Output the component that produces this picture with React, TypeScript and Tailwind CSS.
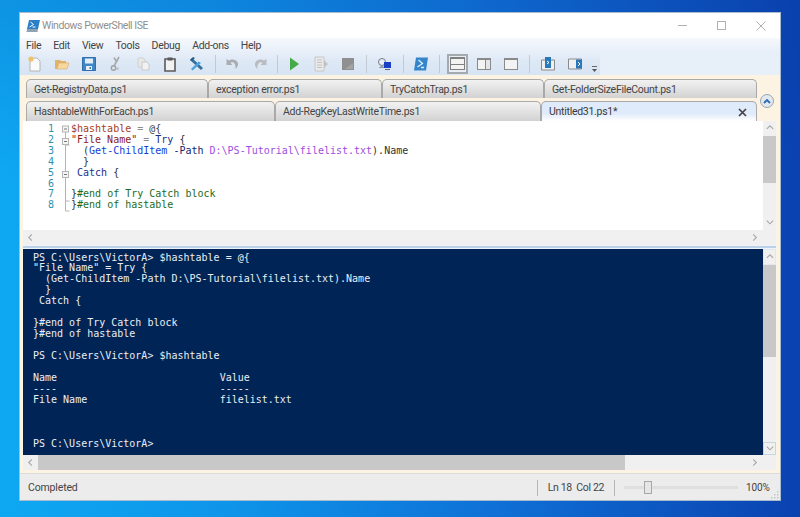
import type { ReactNode } from 'react';

const MONO = "font-['DejaVu_Sans_Mono',monospace]";

const menus = ['File', 'Edit', 'View', 'Tools', 'Debug', 'Add-ons', 'Help'];

function Tool({ children, width = 'w-[27px]' }: { children: ReactNode; width?: string }) {
  return <div className={`${width} h-full flex items-center justify-center shrink-0`}>{children}</div>;
}

function Sep({ width }: { width: string }) {
  return (
    <div className={`${width} h-full flex items-center justify-center shrink-0`}>
      <div className="w-px h-[18px] bg-[#c0c9d4]" />
    </div>
  );
}

function Ic({ children }: { children: ReactNode }) {
  return (
    <svg width="16" height="16" viewBox="0 0 16 16">
      {children}
    </svg>
  );
}

function Toolbar() {
  return (
    <div className="h-[23px] flex">
      <div className="flex items-center pl-[1.5px] h-full">
        {/* new */}
        <Tool>
          <Ic>
            <path d="M3 2h7l3 3v10H3z" fill="#fbfbfb" stroke="#b4b4b4" />
            <circle cx="4" cy="3" r="2.6" fill="#f3c06a" />
          </Ic>
        </Tool>
        {/* open */}
        <Tool>
          <Ic>
            <path d="M1 13V4h5l1 1h5v2H5L3 13z" fill="#e0b26a" />
            <path d="M3 13l2-6h10l-2 6z" fill="#f6d79c" stroke="#d8ac68" strokeWidth=".6" />
          </Ic>
        </Tool>
        {/* save */}
        <Tool>
          <Ic>
            <path d="M1.5 1.5h13v13h-13z" fill="#3f86c6" stroke="#2f6ea8" />
            <path d="M4 2.500h8v5H4z" fill="#e2edf7" />
            <path d="M5 10h6v4H5z" fill="#e9eff5" />
            <path d="M8.500 11h1.500v2H8.500z" fill="#3a76ac" />
          </Ic>
        </Tool>
        {/* cut */}
        <Tool>
          <Ic>
            <path d="M11 1L6 10M6 1.500l3 5" stroke="#a9a9a9" strokeWidth="1.600" fill="none" />
            <circle cx="5.500" cy="12" r="2.200" fill="none" stroke="#a2a2a2" strokeWidth="1.400" />
            <circle cx="9.500" cy="12.500" r="1.500" fill="#c4c4c4" />
          </Ic>
        </Tool>
        {/* copy */}
        <Tool>
          <Ic>
            <path d="M3 2h5l2 2v7H3z" fill="#e8e8e8" stroke="#cfcfcf" />
            <path d="M7 6h5l2 2v6H7z" fill="#f2f2f2" stroke="#c8c8c8" />
          </Ic>
        </Tool>
        {/* paste */}
        <Tool>
          <Ic>
            <path d="M3 3h10v12H3z" fill="#f2f2f2" stroke="#595959" strokeWidth="1.600" />
            <path d="M5.500 1.500h5v3h-5z" fill="#595959" />
          </Ic>
        </Tool>
        {/* compile */}
        <Tool>
          <Ic>
            <path d="M3 2l11 10-2 2L1 4z" fill="#35709f" />
            <path d="M9.500 5.500L2 13l1.600 1.600L12 7z" fill="#4da3dc" />
            <path d="M1 4l3-3 2 1-3 3z" fill="#2a5d85" />
          </Ic>
        </Tool>
        <Sep width="w-[9px]" />
        {/* undo */}
        <Tool>
          <Ic>
            <path d="M1.500 3v6h6L5.300 6.800C7.500 5.500 11 6.500 10.500 13c3.500-3 3.500-7-.5-9-2-1-4.500-.6-6 .6z" fill="#a9adb1" />
          </Ic>
        </Tool>
        {/* redo */}
        <Tool>
          <Ic>
            <path d="M14.500 3v6h-6l2.200-2.200C8.500 5.500 5 6.500 5.500 13c-3.500-3-3.500-7 .5-9 2-1 4.500-.6 6 .6z" fill="#b8bcc0" />
          </Ic>
        </Tool>
        <Sep width="w-[7px]" />
        {/* run */}
        <Tool>
          <Ic>
            <path d="M4 1.500v13l9-6.500z" fill="#45aa49" />
          </Ic>
        </Tool>
        {/* run selection */}
        <Tool>
          <Ic>
            <path d="M2 1h9v14H2z" fill="#e9e9e9" stroke="#c8c8c8" />
            <path d="M4 4h5M4 6.500h5M4 9h5M4 11.500h5" stroke="#c2c2c2" />
            <path d="M11 4v8l4-4z" fill="#c2c2c2" />
          </Ic>
        </Tool>
        {/* stop */}
        <Tool>
          <Ic>
            <path d="M2 2h12v12H2z" fill="#8f8f8f" />
            <path d="M5 13l8-6v6z" fill="#a3a3a3" />
          </Ic>
        </Tool>
        <Sep width="w-[10px]" />
        {/* remote */}
        <Tool>
          <Ic>
            <circle cx="5" cy="6" r="3.500" fill="#e8eef4" stroke="#6f7c88" />
            <path d="M2 12c.5-2.500 5.500-2.500 6 0z" fill="#8a96a2" />
            <path d="M7 6h7v6H7z" fill="#1b3fc4" />
            <path d="M8 13h5v1H8z" fill="#58656f" />
          </Ic>
        </Tool>
        <Sep width="w-[9px]" />
        {/* new remote powershell tab */}
        <Tool>
          <Ic>
            <path d="M3 1.500h12l-2 13H1z" fill="#3585cc" />
            <path d="M5.500 4l4 3.500-5 3.500M8 11.500h3" stroke="#dff0fb" strokeWidth="1.300" fill="none" />
          </Ic>
        </Tool>
        <Sep width="w-[9px]" />
        {/* script pane top */}
        <Tool>
          <div className="w-[21px] h-[20px] border-2 border-[#a4aab0] bg-[#e9eef4] flex items-center justify-center">
            <div className="w-[15px] h-[13px] border border-[#808080] border-t-2 bg-[#f3f3f3] flex flex-col justify-center">
              <div className="h-px bg-[#808080]" />
            </div>
          </div>
        </Tool>
        {/* script pane right */}
        <Tool>
          <div className="w-[14px] h-[12px] border border-[#8a8a8a] border-t-2 bg-[#f3f3f3] flex justify-end">
            <div className="w-[5px] h-full border-l border-[#8a8a8a] bg-[#e2e6ea]" />
          </div>
        </Tool>
        {/* script pane maximized */}
        <Tool>
          <div className="w-[14px] h-[12px] border border-[#8a8a8a] border-t-2 bg-[#f3f3f3]" />
        </Tool>
        <Sep width="w-[10px]" />
        {/* show script pane */}
        <Tool>
          <Ic>
            <path d="M1.500 4h13v10h-13z" fill="#eef0f2" stroke="#8a8a8a" />
            <path d="M5 1h6v11H5z" fill="#2a78b8" />
            <path d="M7 5l2 1.500-2 1.500" stroke="#fff" fill="none" />
          </Ic>
        </Tool>
        <Tool>
          <Ic>
            <path d="M1.500 3h13v10h-13z" fill="#eef0f2" stroke="#8a8a8a" />
            <path d="M9 3.500h6v9H9z" fill="#2a78b8" />
            <path d="M11 6l2 2-2 2" stroke="#fff" fill="none" />
          </Ic>
        </Tool>
        <div className="w-[11px] h-full flex items-end justify-center pb-[3px]">
          <svg width="7" height="6" viewBox="0 0 7 6">
            <path d="M1 .5h5" stroke="#666" />
            <path d="M1 3h5L3.500 6z" fill="#555" />
          </svg>
        </div>
      </div>
      <div className="flex-1 bg-[#e7eff9]" />
    </div>
  );
}

function Tab({ name, width, active }: { name: string; width: string; active?: boolean }) {
  return (
    <div
      className={`${width} shrink-0 h-full rounded-t-[5px] border border-b-0 border-[#a9a9a9] flex items-center justify-between pl-[7px] pr-[9px] pt-[1px] text-[10.500px] tracking-[-0.28px] ${
        active
          ? 'bg-[linear-gradient(#dfeafa_60%,#ffffff)] text-[#3a3a3a]'
          : 'bg-[linear-gradient(#f2f2f2,#d2d2d2)] text-[#444]'
      }`}
    >
      <span className="whitespace-nowrap">{name}</span>
      {active && (
        <svg width="9" height="9" viewBox="0 0 9 9">
          <path d="M1 1l7 7M8 1l-7 7" stroke="#444" strokeWidth="1.700" />
        </svg>
      )}
    </div>
  );
}

function ScrollBtn({ dir }: { dir: 'up' | 'down' | 'left' | 'right' }) {
  const d = {
    up: 'M1.500 5.500L5 2l3.500 3.500',
    down: 'M1.500 3L5 6.500 8.500 3',
    left: 'M6 1.500L2.500 5 6 8.500',
    right: 'M3 1.500L6.500 5 3 8.500',
  }[dir];
  return (
    <svg width="10" height="9" viewBox="0 0 10 10">
      <path d={d} stroke="#a6a6a6" strokeWidth="1.200" fill="none" />
    </svg>
  );
}

function FoldMargin() {
  return (
    <svg width="10" height="88" viewBox="0 0 10 88" className="shrink-0">
      <path d="M4.500 8v79h4M4.500 77h4M4.500 21h4" stroke="#b4b4b4" fill="none" />
      {[4.5, 17, 50].map((y) => (
        <g key={y}>
          <rect x="1.500" y={y - 2.5} width="6" height="6" fill="#f4f4f4" stroke="#b4b4b4" />
          <path d={`M3 ${y + 0.5}h3`} stroke="#777" />
        </g>
      ))}
    </svg>
  );
}

const editorLines: ReactNode[] = [
  <span className="text-[#a8401a]">$hashtable <span className="text-[#8c8c8c]">=</span> <span className="text-[#444]">@{'{'}</span></span>,
  <span><span className="text-[#8b1a1a]">"File Name"</span> <span className="text-[#8c8c8c]">=</span> <span className="text-[#1c2f8f]">Try</span> <span className="text-[#333]">{'{'}</span></span>,
  <span>  <span className="text-[#333]">(</span><span className="text-[#1240d8]">Get-ChildItem</span> <span className="text-[#14246e]">-Path</span> <span className="text-[#9a4fe0]">D:\PS-Tutorial\filelist.txt</span><span className="text-[#333]">).Name</span></span>,
  <span className="text-[#333]">  {'}'}</span>,
  <span> <span className="text-[#1c2f8f]">Catch</span> <span className="text-[#333]">{'{'}</span></span>,
  <span> </span>,
  <span><span className="text-[#333]">{'}'}</span><span className="text-[#1d6b1d]">#end of Try Catch block</span></span>,
  <span><span className="text-[#333]">{'}'}</span><span className="text-[#1d6b1d]">#end of hastable</span></span>,
];

const consoleText = `PS C:\\Users\\VictorA> $hashtable = @{
"File Name" = Try {
  (Get-ChildItem -Path D:\\PS-Tutorial\\filelist.txt).Name
  }
 Catch {

}#end of Try Catch block
}#end of hastable

PS C:\\Users\\VictorA> $hashtable

Name                           Value
----                           -----
File Name                      filelist.txt



PS C:\\Users\\VictorA>`;

export default function App() {
  return (
    <div className="w-[800px] h-[517px] overflow-hidden pt-[13px] pl-[20px] bg-[linear-gradient(#0a3aa02e,transparent_35%),linear-gradient(90deg,#0ea8f2_0%,#0e95ea_28%,#0f70d6_62%,#0a42b0_100%)]">
      <div className="w-[760px] h-[487px] flex flex-col bg-[#fdf3e2] font-['Roboto',sans-serif] shadow-[0_0_0_1px_#a9bccf]">
        {/* title bar */}
        <div className="h-[25px] shrink-0 bg-white flex items-center pl-[6px]">
          <svg width="14" height="14" viewBox="0 0 14 14">
            <path d="M3 1h11l-2 9H1z" fill="#2a7fc9" />
            <path d="M1 10h11l-.5 3H.5z" fill="#8fa3b3" />
            <path d="M4.500 3l3 2.500-4 2.500M6.500 8h3" stroke="#fff" strokeWidth="1" fill="none" />
          </svg>
          <span className="ml-[2px] text-[10.500px] tracking-[-0.42px] text-[#8f8f8f]">Windows PowerShell ISE</span>
          <div className="ml-auto flex items-center pr-[14px] gap-[30px]">
            <div className="w-[9px] h-px bg-[#b0b0b0]" />
            <div className="w-[9px] h-[9px] border border-[#b0b0b0]" />
            <svg width="10" height="10" viewBox="0 0 10 10">
              <path d="M.5.500l9 9M9.500.500l-9 9" stroke="#b0b0b0" />
            </svg>
          </div>
        </div>
        {/* menu and toolbar */}
        <div className="shrink-0 bg-[linear-gradient(#f6f9fd,#dfe9f6_60%,#d7e4f3)]">
          <div className="h-[14px] flex items-center pl-[6px] pt-[1px] gap-[12px] text-[10.500px] tracking-[-0.3px] text-[#444]">
            {menus.map((m) => (
              <span key={m}>{m}</span>
            ))}
          </div>
          <Toolbar />
        </div>
        {/* tabs */}
        <div className="h-[46px] shrink-0 flex pl-[6px] pt-[4px] pr-[3px]">
          <div className="flex flex-col w-[731px]">
            <div className="h-[19px] flex">
              <Tab name="Get-RegistryData.ps1" width="w-[182px]" />
              <Tab name="exception error.ps1" width="w-[174px]" />
              <Tab name="TryCatchTrap.ps1" width="w-[162px]" />
              <Tab name="Get-FolderSizeFileCount.ps1" width="w-[213px]" />
            </div>
            <div className="h-[20px] mt-[3px] flex">
              <Tab name="HashtableWithForEach.ps1" width="w-[249px]" />
              <Tab name="Add-RegKeyLastWriteTime.ps1" width="w-[266px]" />
              <Tab name="Untitled31.ps1*" width="w-[216px]" active />
            </div>
          </div>
          <div className="flex-1 flex items-center justify-center pt-[2px]">
            <div className="w-[14px] h-[14px] rounded-full border border-[#9aa6b2] bg-[#e3e8ee] flex items-center justify-center">
              <svg width="8" height="6" viewBox="0 0 8 6">
                <path d="M1 5l3-3 3 3" stroke="#2a6cb4" strokeWidth="1.800" fill="none" />
              </svg>
            </div>
          </div>
        </div>
        {/* editor */}
        <div className="h-[124px] shrink-0 ml-[3px] mr-[4px] flex bg-[#f0f0f0]">
          <div className="flex-1 flex flex-col min-w-0">
            <div className={`flex-1 bg-white flex pt-[3px] text-[10px] leading-[10.900px] ${MONO}`}>
              <div className="w-[31px] shrink-0 text-right text-[#2b91af] whitespace-pre">
                {editorLines.map((_, i) => (
                  <div key={i}>{i + 1}</div>
                ))}
              </div>
              <div className="ml-[7px]">
                <FoldMargin />
              </div>
              <div className="whitespace-pre">
                {editorLines.map((line, i) => (
                  <div key={i}>{line}</div>
                ))}
              </div>
            </div>
            <div className="h-[15px] shrink-0 flex items-center justify-between px-[3px]">
              <ScrollBtn dir="left" />
              <ScrollBtn dir="right" />
            </div>
          </div>
          <div className="w-[13px] shrink-0 flex flex-col">
            <div className="h-[15px] flex items-center justify-center">
              <ScrollBtn dir="up" />
            </div>
            <div className="h-[47px] bg-[#c8c8c8]" />
            <div className="flex-1" />
            <div className="h-[15px] flex items-center justify-center">
              <ScrollBtn dir="down" />
            </div>
            <div className="h-[15px]" />
          </div>
        </div>
        {/* splitter */}
        <div className="h-[4px] shrink-0 ml-[3px] mr-[4px] flex flex-col bg-[#eef3f9]">
          <div className="h-[2px] mt-px bg-[#b9d2ea]" />
        </div>
        {/* console */}
        <div className="flex-1 min-h-0 ml-[3px] mr-[4px] flex bg-[#f0f0f0]">
          <div className="flex-1 flex flex-col min-w-0">
            <pre className={`flex-1 min-h-0 bg-[#012456] text-[#eaeef3] pl-[10px] pt-[3.500px] text-[10px] leading-[10.950px] ${MONO}`}>
              {consoleText}
            </pre>
            <div className="h-[15px] shrink-0 flex">
              <div className="w-[15px] flex items-center justify-center">
                <ScrollBtn dir="left" />
              </div>
              <div className="w-[587px] bg-[#c8c8c8]" />
              <div className="flex-1 flex items-center justify-end pr-[3px]">
                <ScrollBtn dir="right" />
              </div>
            </div>
          </div>
          <div className="w-[13px] shrink-0 flex flex-col">
            <div className="h-[16px] border border-[#e2e8ef] flex items-center justify-center">
              <ScrollBtn dir="up" />
            </div>
            <div className="h-[92px] bg-[#c8c8c8]" />
            <div className="flex-1" />
            <div className="h-[13px] border border-[#c8d6e4] flex items-center justify-center">
              <ScrollBtn dir="down" />
            </div>
            <div className="h-[15px]" />
          </div>
        </div>
        <div className="h-[3px] shrink-0" />
        {/* status bar */}
        <div className="h-[27px] shrink-0 bg-[#ececec] border-t border-[#dcdcdc] flex items-center pl-[8px] pt-[1px] text-[10.500px] tracking-[-0.15px] text-[#444] relative">
          <span>Completed</span>
          <div className="ml-auto flex items-center h-full">
            <div className="w-px h-[16px] bg-[#b4b4b4]" />
            <span className="ml-[10px] whitespace-pre tracking-[-0.35px]">Ln 18  Col 22</span>
            <div className="ml-[10px] w-px h-[16px] bg-[#b4b4b4]" />
            <div className="ml-[9px] w-[114px] h-[13px] flex items-center relative">
              <div className="w-full h-[3px] bg-[#dfdfdf]" />
              <div className="absolute left-[20px] top-0 w-[8px] h-[13px] border border-[#a8a8a8] bg-[#e6e6e6]" />
            </div>
            <span className="ml-[8px] w-[34px] text-[10px]">100%</span>
          </div>
          <svg width="8" height="8" viewBox="0 0 8 8" className="absolute right-[1px] bottom-[1px]">
            <path d="M6 0h1.500v1.500H6zM3 3h1.500v1.500H3zM6 3h1.500v1.500H6zM0 6h1.500v1.500H0zM3 6h1.500v1.500H3zM6 6h1.500v1.500H6z" fill="#c0c6cc" />
          </svg>
        </div>
      </div>
    </div>
  );
}
